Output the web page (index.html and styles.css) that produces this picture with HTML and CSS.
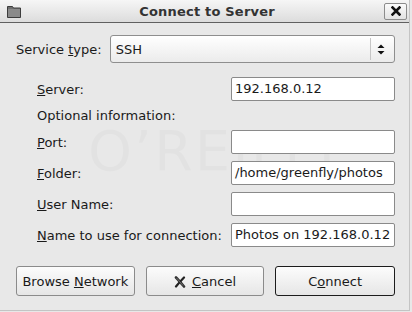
FILE: index.html
```html
<!DOCTYPE html>
<html lang="en">
<head>
    <meta charset="UTF-8">
    <title>Connect to Server</title>
    <link rel="stylesheet" href="styles.css">
</head>
<body>
    <div class="window">
        <div class="titlebar">
            <div class="title-icon">
                <svg width="14" height="13" viewBox="0 0 14 13">
                    <path d="M0.5 1.5 h5 l1 1.5 h7 v9.5 h-13 z" fill="#6e6e6e" stroke="#3c3c3c"/>
                    <rect x="1" y="4" width="12" height="8" fill="#8a8a8a"/>
                </svg>
            </div>
            <div class="title">Connect to Server</div>
            <div class="title-actions">
                <div class="close-btn">
                    <svg width="10" height="10" viewBox="0 0 10 10">
                        <path d="M1.5 1.5 L8.5 8.5 M8.5 1.5 L1.5 8.5" stroke="#111" stroke-width="2.6" stroke-linecap="square"/>
                    </svg>
                </div>
            </div>
        </div>

        <div class="watermark">O’REILLY<sup>®</sup></div>

        <div class="content">
            <div class="service-row">
                <span class="label">Service <u>t</u>ype:</span>
                <div class="combo">
                    <span class="combo-value">SSH</span>
                    <span class="combo-sep"></span>
                    <svg class="combo-arrows" width="8" height="11" viewBox="0 0 8 11">
                        <path d="M0.5 4 L4 0.5 L7.5 4 z" fill="#111"/>
                        <path d="M0.5 7 L4 10.5 L7.5 7 z" fill="#111"/>
                    </svg>
                </div>
            </div>

            <div class="form-grid">
                <span class="label"><u>S</u>erver:</span>
                <div class="entry">192.168.0.12</div>

                <span class="label optional">Optional information:</span>

                <span class="label"><u>P</u>ort:</span>
                <div class="entry"></div>

                <span class="label"><u>F</u>older:</span>
                <div class="entry">/home/greenfly/photos</div>

                <span class="label"><u>U</u>ser Name:</span>
                <div class="entry"></div>

                <span class="label"><u>N</u>ame to use for connection:</span>
                <div class="entry">Photos on 192.168.0.12</div>
            </div>

            <div class="actions">
                <div class="btn"><span>Browse <u>N</u>etwork</span></div>
                <div class="btn">
                    <svg class="btn-icon" width="12" height="12" viewBox="0 0 12 12">
                        <path d="M2 1.5 C4 3.5 7 7 10 10.5" stroke="#333" stroke-width="2.6" fill="none" stroke-linecap="round"/>
                        <path d="M10 1.5 C7.5 4 4.5 7.5 2 10.5" stroke="#222" stroke-width="2.2" fill="none" stroke-linecap="round"/>
                        <path d="M2.5 2 C4 3.5 6 6 9 9.5" stroke="#888" stroke-width="0.7" fill="none"/>
                    </svg>
                    <span><u>C</u>ancel</span>
                </div>
                <div class="btn btn-default"><span>C<u>o</u>nnect</span></div>
            </div>
        </div>
    </div>
</body>
</html>
```

FILE: styles.css
```css
body {
    margin: 0;
    width: 412px;
    height: 312px;
    background: #e8e8e8;
    font-family: "DejaVu Sans", "Liberation Sans", sans-serif;
    font-size: 13px;
    color: #1a1a1a;
    overflow: hidden;
}

.window {
    position: relative;
    width: 409px;
    height: 310px;
    border-right: 1px solid #c4c4c4;
    border-bottom: 1px solid #c4c4c4;
    background: #e8e8e8;
}

/* title bar */
.titlebar {
    display: grid;
    grid-template-columns: 1fr auto 1fr;
    align-items: center;
    height: 22px;
    padding: 0 2px 0 7px;
    background: linear-gradient(#f6f6f6, #dcdcdc);
    border-bottom: 1px solid #606060;
}

.title-icon {
    display: flex;
    align-items: center;
    height: 22px;
}

.title {
    font-weight: bold;
    color: #333;
    letter-spacing: 0.2px;
}

.title-actions {
    display: flex;
    justify-content: flex-end;
}

.close-btn {
    display: flex;
    align-items: center;
    justify-content: center;
    width: 21px;
    height: 15px;
    border: 1px solid #8c8c8c;
    border-radius: 2px;
    background: linear-gradient(#fbfbfb, #e2e2e2);
}

/* content */
.content {
    position: relative;
    padding: 12px 14px 0 16px;
}

.label {
    white-space: nowrap;
}

.service-row {
    display: flex;
    align-items: center;
    gap: 8px;
}

.combo {
    flex: 1;
    display: flex;
    align-items: center;
    box-sizing: border-box;
    height: 28px;
    padding: 0 9px 0 5px;
    border: 1px solid #8e8e8e;
    border-radius: 3px;
    background: linear-gradient(#ffffff, #ebebeb);
}

.combo-value {
    flex: 1;
}

.combo-sep {
    width: 1px;
    height: 22px;
    background: #c6c6c6;
    margin-right: 6px;
}

.form-grid {
    display: grid;
    grid-template-columns: 1fr 164px;
    align-items: center;
    row-gap: 7px;
    margin-top: 14px;
    padding-left: 21px;
}

.optional {
    grid-column: 1 / 3;
    line-height: 15px;
}

.entry {
    box-sizing: border-box;
    height: 24px;
    padding: 0 3px;
    line-height: 22px;
    border: 1px solid #8a8a8a;
    border-radius: 2px;
    background: #fff;
    white-space: nowrap;
    overflow: hidden;
}

/* buttons */
.actions {
    display: flex;
    gap: 11px;
    margin-top: 19px;
}

.btn {
    display: flex;
    align-items: center;
    justify-content: center;
    gap: 6px;
    box-sizing: border-box;
    width: 119px;
    height: 30px;
    border: 1px solid #8b8b8b;
    border-radius: 3px;
    background: linear-gradient(#fcfcfc, #e6e6e6);
    white-space: nowrap;
}

.btn-default {
    width: 120px;
    border-color: #1c1c1c;
}

.btn-icon {
    margin-top: 1px;
}

/* faint watermark behind the form */
.watermark {
    position: absolute;
    left: 88px;
    top: 118px;
    font-size: 56px;
    color: rgba(0, 0, 0, 0.022);
    letter-spacing: 2px;
    pointer-events: none;
}

.watermark sup {
    font-size: 18px;
}
```
